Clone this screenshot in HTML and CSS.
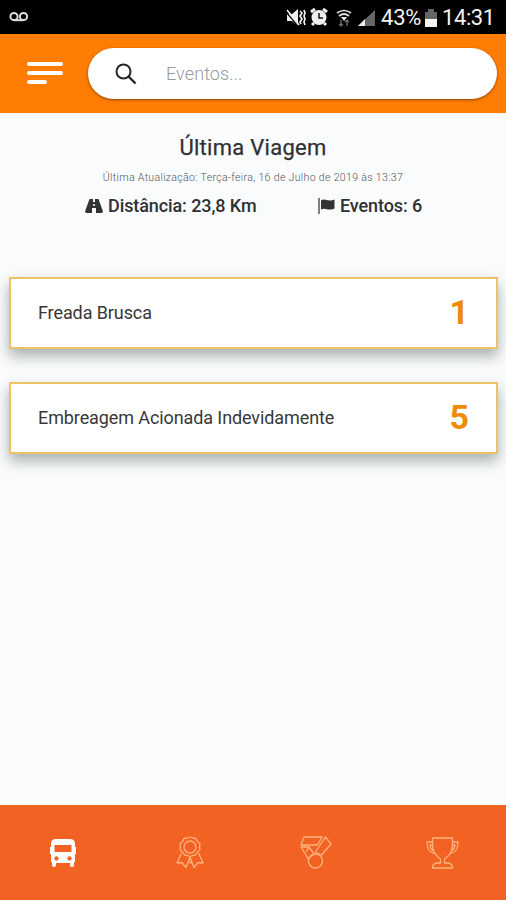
FILE: index.html
```html
<!DOCTYPE html>
<html lang="pt-BR">
<head>
<meta charset="utf-8">
<title>Última Viagem</title>
<link rel="stylesheet" href="styles.css">
</head>
<body>
<div class="app">
  <div class="status">
    <svg class="voicemail" width="20" height="12" viewBox="0 0 20 12" fill="none" stroke="#ddd" stroke-width="2"><circle cx="5" cy="5.5" r="3.6"/><circle cx="14.5" cy="5.5" r="3.6"/><path d="M5 9.2h9.500"/></svg>
    <svg class="signals" width="91" height="22" viewBox="0 0 91 22">
      <path d="M1 7h5l6-5v17l-6-5H1z" fill="#eee"/><path d="M0 5l12 14" stroke="#000" stroke-width="1.200"/><path d="M1 3l12 15M14 4l2 2-2 3 2 3-2 3 1 2M18 3l1 3-1 3 1 3-1 3 1 3" fill="none" stroke="#eee" stroke-width="1.700"/>
      <circle cx="33" cy="10.500" r="7.500" fill="#eee"/><path d="M25 5l4-3M37 2l4 3M28 16l-2 2M38 16l2 2" stroke="#eee" stroke-width="3"/><path d="M33 6v5h4" fill="none" stroke="#111" stroke-width="1.500"/>
      <path d="M51 6q7-5 14 0M53 9q5-4 10 0" fill="none" stroke="#ddd" stroke-width="1.700"/><path d="M55 10h6l-3 4z" fill="#eee"/><path d="M55 13v6M53 17l2 2 2-2M61 19v-6M59 15l2-2 2 2" fill="none" stroke="#666" stroke-width="1.500"/>
      <path d="M72 19L89 3v16z" fill="#666"/><path d="M72 19l7-7v7z" fill="#eee"/>
    </svg>
    <span class="percent">43%</span>
    <svg class="battery" width="12" height="18" viewBox="0 0 12 18"><path d="M0 3h3V0h6v3h3v7H0z" fill="#666"/><path d="M0 10h12v8H0z" fill="#f4f4f4"/></svg>
    <span class="clock">14:31</span>
  </div>
  <header class="header">
    <svg class="menu" width="38" height="24" viewBox="0 0 38 24" stroke="#fff" stroke-width="4" stroke-linecap="round"><path d="M3 3h32M3 12h32M3 21h16"/></svg>
    <div class="search">
      <svg width="22" height="22" viewBox="0 0 22 22" fill="none" stroke="#272727" stroke-width="2"><circle cx="8.500" cy="8.500" r="7"/><path d="M13.500 13.500l7 7" stroke-width="2.400"/></svg>
      <span class="hint">Eventos...</span>
    </div>
  </header>
  <main class="main">
    <h1 class="title">Última Viagem</h1>
    <p class="updated">Última Atualização: Terça-feira, 16 de Julho de 2019 às 13:37</p>
    <div class="stats">
      <div class="distance">
        <svg width="18" height="14" viewBox="0 0 18 14"><path fill="#333" d="M4.500 0H8v3h2V0h3.500L18 12.500 17 14h-6V9H7v5H1l-1-1.500z"/><path d="M8.200 5h1.600v2H8.200z" fill="#fafbfd"/></svg>
        <span>Distância: 23,8 Km</span>
      </div>
      <div class="events">
        <svg width="17" height="16" viewBox="0 0 17 16"><path d="M1 0v16" stroke="#555" stroke-width="1.500"/><path d="M3 2.500c4-3 6 2 13.500-1v9c-6 3-9-1.500-13.500 1z" fill="#333"/></svg>
        <span>Eventos: 6</span>
      </div>
    </div>
    <div class="cards">
      <div class="card"><span class="name">Freada Brusca</span><span class="count">1</span></div>
      <div class="card"><span class="name">Embreagem Acionada Indevidamente</span><span class="count">5</span></div>
    </div>
  </main>
  <nav class="nav">
    <div class="tab"><svg width="26" height="28" viewBox="0 0 26 28"><path fill="#fff" fill-rule="evenodd" d="M6 0h14q5 0 5 5v3h1v7h-1v8h-1v3q0 2-2 2t-2-2v-2H6v2q0 2-2 2t-2-2v-3H1v-8H0V8h1V5q0-5 5-5zM4.500 6v7h17V6zM6.500 17.300a2.200 2.200 0 1 0 .01 0zM19.500 17.300a2.200 2.200 0 1 0 .01 0z"/></svg></div>
    <div class="tab"><svg class="line" width="28" height="33" viewBox="0 0 28 33"><path d="M14 1l3 1 3 .5 1.500 3L24 8l-.5 3 .5 3-2.500 2-2 3-3 .5-2.500 1-2.500-1-3-.5-2-3L4 14l.5-3L4 8l2.500-2.500L8 2.500l3-.5z"/><circle cx="14" cy="11" r="6"/><path d="M5.500 17L1 27l5-.5 4 5L14 21l4 10.500 4-5 5 .5-4.500-10M14 21l-2 5 4 1-2-6"/></svg></div>
    <div class="tab"><svg class="line medal" width="32" height="33" viewBox="0 0 32 33"><path d="M4 1h18l-4.500 8H1zM25.500 1l5.500 7-9.500 11-6-3zM1 11h8l5 7-6 4.500zM9 11l-3 5"/><circle cx="15.500" cy="25" r="7"/></svg></div>
    <div class="tab"><svg class="line" width="33" height="32" viewBox="0 0 33 32"><path d="M6.500 1h20v3c0 10-2 14-8 18v4h4q4 1 4 5h-20q0-4 4-5h4v-4c-6-4-8-8-8-18zM6.500 5H1c0 8 3 11 9 12M26.500 5H32c0 8-3 11-9 12M7 8H4q1 5 4 6M26 8h3q-1 5-4 6"/></svg></div>
  </nav>
</div>
</body>
</html>
```
FILE: styles.css
```css
* { box-sizing: border-box; }
body { margin: 0; font-family: Roboto, "Liberation Sans", sans-serif; }
.app { width: 506px; height: 900px; display: flex; flex-direction: column; background: #fafbfd; }
.status { height: 34px; background: #000; color: #f2f2f2; display: flex; align-items: center; padding: 1px 0 0 9px; font-size: 22px; line-height: 34px; }
.voicemail { margin-top: -2px; }
.signals { margin-left: 257px; }
.percent { margin-left: 4px; width: 40px; letter-spacing: -0.2px; white-space: nowrap; }
.battery { margin-left: 4px; }
.clock { margin-left: 5px; letter-spacing: -0.4px; }
.header { height: 79px; background: #ff7d03; display: flex; align-items: center; padding: 0 9px 0 26px; }
.menu { margin-top: -1px; }
.search { margin-left: 24px; height: 51px; flex: 1; border-radius: 26px; background: #fff; box-shadow: 0 1px 3px rgba(80, 40, 0, .65); display: flex; align-items: center; padding-left: 27px; }
.hint { margin-left: 29px; font-size: 18px; font-weight: 300; color: #999; letter-spacing: .1px; }
.main { flex: 1; }
.title { margin: 20px 0 0; text-align: center; font-size: 22px; line-height: 30px; font-weight: 400; color: #303033; letter-spacing: .28px; -webkit-text-stroke: .25px #303033; }
.updated { margin: 7px 0 0; text-align: center; font-size: 10.6px; line-height: 15px; font-weight: 300; color: #555; white-space: nowrap; letter-spacing: .31px; }
.stats { margin-top: 9px; display: flex; height: 24px; line-height: 24px; font-size: 18px; font-weight: 500; color: #303033; padding-left: 85px; white-space: nowrap; letter-spacing: -.1px; }
.distance { display: flex; align-items: center; gap: 5px; width: 233px; }
.events { display: flex; align-items: center; gap: 5px; }
.cards { margin-top: 59px; padding: 0 8px 0 9px; display: flex; flex-direction: column; gap: 33px; }
.card { height: 72px; border: 2px solid #ecc264; background: #fff; box-shadow: 0 7px 13px rgba(55, 70, 65, .42); display: flex; align-items: center; justify-content: space-between; padding: 0 27px 2px 27px; }
.name { font-size: 18px; font-weight: 400; color: #383838; letter-spacing: -.1px; }
.count { font-size: 34px; font-weight: 700; color: #ee8b0c; }
.nav { height: 95px; background: #f26223; display: flex; }
.tab { flex: 1; display: flex; align-items: center; justify-content: center; }
.line { fill: none; stroke: #ffb27c; stroke-width: 1.3; stroke-linejoin: round; }
```
